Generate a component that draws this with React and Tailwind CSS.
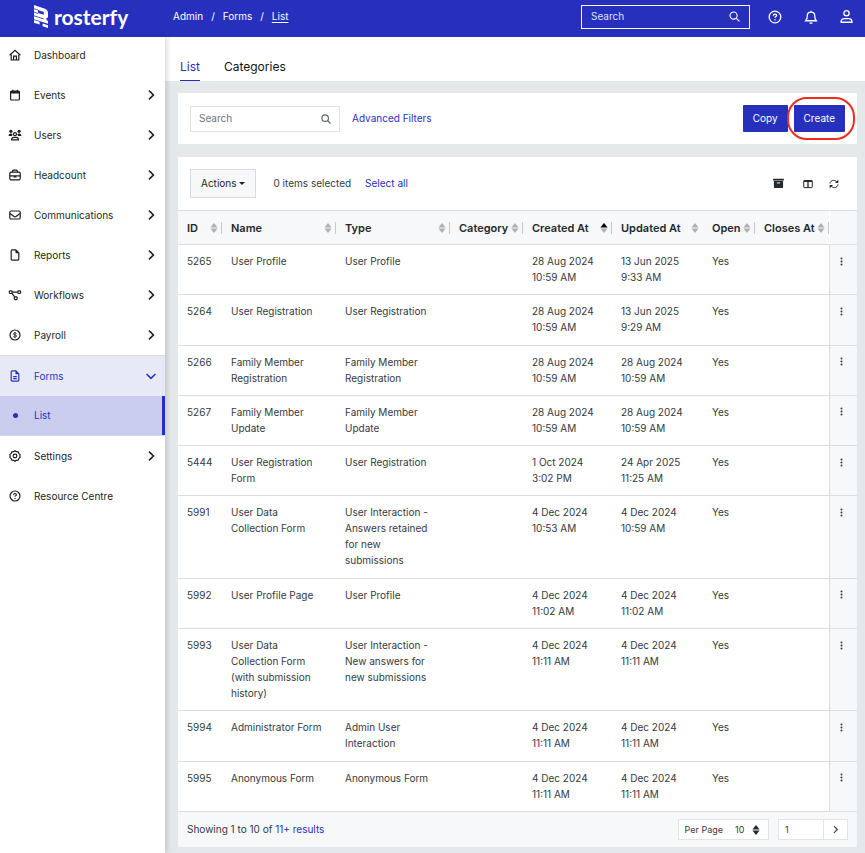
import React, { useState } from "react";

const menu = [
  { label: "Dashboard", icon: "home" },
  { label: "Events", icon: "calendar", more: true },
  { label: "Users", icon: "users", more: true },
  { label: "Headcount", icon: "briefcase", more: true },
  { label: "Communications", icon: "mail", more: true },
  { label: "Reports", icon: "file", more: true },
  { label: "Workflows", icon: "flow", more: true },
  { label: "Payroll", icon: "dollar", more: true },
  { label: "Forms", icon: "form", open: true },
  { label: "Settings", icon: "gear", more: true },
  { label: "Resource Centre", icon: "help" },
];

const columns = [
  { label: "ID", width: "w-[44px]" },
  { label: "Name", width: "" },
  { label: "Type", width: "" },
  { label: "Category", width: "w-[73px]" },
  { label: "Created At", width: "w-[89px]", sorted: true },
  { label: "Updated At", width: "w-[91px]", noLine: true },
  { label: "Open", width: "w-[52px]" },
  { label: "Closes At", width: "w-[74px]" },
];

const forms = [
  { id: 5265, name: "User Profile", type: "User Profile", created: "28 Aug 2024 10:59 AM", updated: "13 Jun 2025 9:33 AM" },
  { id: 5264, name: "User Registration", type: "User Registration", created: "28 Aug 2024 10:59 AM", updated: "13 Jun 2025 9:29 AM" },
  { id: 5266, name: "Family Member Registration", type: "Family Member Registration", created: "28 Aug 2024 10:59 AM", updated: "28 Aug 2024 10:59 AM" },
  { id: 5267, name: "Family Member Update", type: "Family Member Update", created: "28 Aug 2024 10:59 AM", updated: "28 Aug 2024 10:59 AM" },
  { id: 5444, name: "User Registration Form", type: "User Registration", created: "1 Oct 2024 3:02 PM", updated: "24 Apr 2025 11:25 AM" },
  { id: 5991, name: "User Data Collection Form", type: "User Interaction - Answers retained for new submissions", created: "4 Dec 2024 10:53 AM", updated: "4 Dec 2024 10:59 AM" },
  { id: 5992, name: "User Profile Page", type: "User Profile", created: "4 Dec 2024 11:02 AM", updated: "4 Dec 2024 11:02 AM" },
  { id: 5993, name: "User Data Collection Form (with submission history)", type: "User Interaction - New answers for new submissions", created: "4 Dec 2024 11:11 AM", updated: "4 Dec 2024 11:11 AM" },
  { id: 5994, name: "Administrator Form", type: "Admin User Interaction", created: "4 Dec 2024 11:11 AM", updated: "4 Dec 2024 11:11 AM" },
  { id: 5995, name: "Anonymous Form", type: "Anonymous Form", created: "4 Dec 2024 11:11 AM", updated: "4 Dec 2024 11:11 AM" },
];

const shapes = {
  home: (
    <>
      <path d="M.6 6.200 6 1.300l5.400 4.900" />
      <path d="M2.200 5.400v5.600h7.600V5.400" />
      <path d="M4.600 11V7.200h2.800V11" />
    </>
  ),
  calendar: (
    <>
      <rect x="1.600" y="2.200" width="8.800" height="8.800" rx="1" />
      <path d="M1.600 3.300h8.800" strokeWidth="2.400" />
      <path d="M3.700.8v2M8.300.8v2" />
    </>
  ),
  users: (
    <>
      <circle cx="1.900" cy="2.300" r="1.600" fill="currentColor" stroke="none" />
      <circle cx="10.100" cy="2.300" r="1.600" fill="currentColor" stroke="none" />
      <path d="M-.4 6.900c0-1.700.9-2.500 2.300-2.500.9 0 1.500.3 1.700.7L3 6.900zM12.400 6.900c0-1.700-.9-2.500-2.300-2.500-.9 0-1.500.3-1.700.7L9 6.900z" fill="currentColor" stroke="none" />
      <circle cx="6" cy="5.200" r="1.500" />
      <path d="M2.600 10.900c0-1.700 1-2.500 2.200-2.500h2.400c1.200 0 2.200.8 2.200 2.500z" />
    </>
  ),
  briefcase: (
    <>
      <rect x=".8" y="3.200" width="10.400" height="7.600" rx="1.200" />
      <path d="M3.600 3.200V2.200c0-.6.4-1 1-1h2.800c.6 0 1 .4 1 1v1M.8 6.800h10.400M4.600 7.800h2.800" />
    </>
  ),
  mail: (
    <>
      <rect x=".8" y="2" width="10.400" height="8" rx="1.200" />
      <path d="M1 4.400 5 7.400c.6.5 1.400.5 2 0l4-3" />
    </>
  ),
  file: (
    <>
      <path d="M2.200 1.900c0-.6.4-1 1-1h3.600l3 3v6.200c0 .6-.4 1-1 1H3.200c-.6 0-1-.4-1-1z" />
      <path d="M6.800.9v3h3z" fill="currentColor" strokeWidth=".6" />
    </>
  ),
  form: (
    <>
      <path d="M2.200 1.900c0-.6.4-1 1-1h3.600l3 3v6.200c0 .6-.4 1-1 1H3.200c-.6 0-1-.4-1-1z" />
      <path d="M6.800.9v3h3z" fill="currentColor" strokeWidth=".6" />
      <path d="M4.200 6.600h3.600M4.200 8.700h3.600" />
    </>
  ),
  flow: (
    <>
      <rect x=".4" y="1.800" width="2.700" height="2.700" rx=".8" />
      <rect x="8.900" y="1.800" width="2.700" height="2.700" rx=".8" />
      <rect x="5.300" y="7.800" width="2.800" height="2.800" rx=".8" />
      <path d="M3.100 3.100h5.800M3 4.300l2.700 3.600" />
    </>
  ),
  dollar: (
    <>
      <circle cx="6" cy="6" r="5" />
      <path d="M7.500 4.600C7.200 4.100 6.700 3.900 6 3.900c-.9 0-1.500.4-1.500 1S5.100 5.900 6 6s1.600.4 1.600 1.100S6.900 8.200 6 8.200c-.8 0-1.400-.3-1.700-.8M6 3v6" strokeWidth=".9" />
    </>
  ),
  gear: (
    <>
      <path d="m6 .7 1.400 1 1.700.1.700 1.600 1.400 1.200-.4 1.400.4 1.400-1.400 1.200-.7 1.600-1.700.1-1.400 1-1.400-1-1.700-.1-.7-1.600L.8 7.400 1.200 6 .8 4.600l1.400-1.200.7-1.600 1.700-.1z" strokeLinejoin="round" />
      <circle cx="6" cy="6" r="1.800" />
    </>
  ),
  help: (
    <>
      <circle cx="6" cy="6" r="5" />
      <path d="M4.600 4.900c0-.8.600-1.400 1.400-1.400s1.400.5 1.400 1.200c0 .9-1.400 1-1.400 2M6 8v.9" />
    </>
  ),
  bell: (
    <>
      <path d="M1.500 9.200c.9-1 1.300-2 1.300-4 0-1.900 1.300-3.300 3.200-3.300s3.200 1.400 3.200 3.300c0 2 .4 3 1.300 4zM6 .6v1.200" />
      <path d="M4.900 10.800c.5.700 1.700.7 2.200 0" />
    </>
  ),
  user: (
    <>
      <circle cx="6" cy="2.900" r="2.400" />
      <path d="M1 11.300v-.5c0-1.700 1.300-2.800 2.900-2.800h4.200c1.600 0 2.900 1.100 2.900 2.800v.5z" />
    </>
  ),
  search: (
    <>
      <circle cx="5" cy="5" r="3.900" />
      <path d="m8 8 3.400 3.400" />
    </>
  ),
  right: <path d="m4 1.600 4.400 4.400L4 10.400" />,
  down: <path d="M1.600 4 6 8.400 10.400 4" />,
  archive: (
    <>
      <path d="M.2.800h11.600v2H.2z" fill="currentColor" stroke="none" />
      <path d="M1 3.400h10V10c0 .6-.4 1-1 1H2c-.6 0-1-.4-1-1z" fill="currentColor" stroke="none" />
      <path d="M4.200 5.400h3.600" stroke="white" strokeWidth="1" />
    </>
  ),
  board: (
    <>
      <rect x=".9" y="1.900" width="10.200" height="8.400" rx=".8" />
      <path d="M.9 2.700h10.200M6 2.500v7.800" strokeWidth="1.600" />
    </>
  ),
  refresh: (
    <>
      <path d="M1.200 5.500C1.300 3.300 3.200 1.700 5.600 1.700c1.700 0 3 .7 4 2.100M10.800 6.500c-.1 2.200-2 3.800-4.400 3.800-1.700 0-3-.7-4-2.100" />
      <path d="M11.200.8v4H7.200zM.8 11.200v-4h4z" fill="currentColor" stroke="none" />
    </>
  ),
  dots: (
    <>
      <circle cx="6" cy="2" r="1.300" fill="currentColor" stroke="none" />
      <circle cx="6" cy="6" r="1.300" fill="currentColor" stroke="none" />
      <circle cx="6" cy="10" r="1.300" fill="currentColor" stroke="none" />
    </>
  ),
};

const Icon = ({ name, className = "size-3", weight = 1.2 }) => (
  <svg
    viewBox="0 0 12 12"
    fill="none"
    stroke="currentColor"
    strokeWidth={weight}
    aria-hidden="true"
    className={`shrink-0 overflow-visible ${className}`}
  >
    {shapes[name]}
  </svg>
);

const SortIcon = ({ up = "#b0b0b0", down = "#b0b0b0" }) => (
  <svg viewBox="0 0 8 10" className="w-2 h-[10px] shrink-0" aria-hidden="true">
    <path d="M4 0l3.600 4.500H.4z" fill={up} />
    <path d="M4 10l3.600-4.500H.4z" fill={down} />
  </svg>
);

const Logo = () => (
  <a href="#" className="flex items-center gap-1.5 text-white">
    <svg viewBox="0 0 14 23" className="w-[14px] h-[23px]" fill="currentColor" aria-hidden="true">
      <path
        fillRule="evenodd"
        d="M0 0l9.500 3.200C12.500 4.200 14 5.600 14 8v3.200c0 1.600-.8 2.300-2.400 2.200l2.400 2.800v2.600L0 14.200zM4 5l5.800 1.900v2.900L4 7.900z"
      />
      <path d="M0 15l5.600 1.800v2.700L0 17.700zM8.600 18.400l5.400 1.800V23l-5.400-1.800z" />
      <path d="M0 3.700l4 1.300M0 7.200l4 1.300M0 10.800l9.600 3.100" stroke="#2730bd" strokeWidth=".8" />
    </svg>
    <span className="font-[Lato] font-bold text-[21px] leading-6">rosterfy</span>
  </a>
);

const Header = () => (
  <header className="flex items-center h-[37px] shrink-0 pl-[34px] pr-3 pb-1 bg-[#2730bd] text-white">
    <div className="w-[139px] shrink-0">
      <Logo />
    </div>
    <nav className="flex gap-2">
      <a href="#">Admin</a>
      <span>/</span>
      <a href="#">Forms</a>
      <span>/</span>
      <a href="#" className="underline underline-offset-2">List</a>
    </nav>
    <div className="flex items-center ml-auto">
      <label className="flex items-center w-[169px] h-6 px-[9px] border border-white">
        <input
          type="text"
          aria-label="Search"
          placeholder="Search"
          className="w-full min-w-0 outline-none placeholder:text-[#dfe1f7]"
        />
        <Icon name="search" className="size-[11px]" />
      </label>
      <button aria-label="Help" className="ml-[18px]"><Icon name="help" className="size-[14px]" weight={1.1} /></button>
      <button aria-label="Notifications" className="ml-[22px]"><Icon name="bell" className="size-[14px]" weight={1.1} /></button>
      <button aria-label="Account" className="ml-[22px]"><Icon name="user" className="size-[13px]" /></button>
    </div>
  </header>
);

const Sidebar = () => (
  <aside className="w-[165px] shrink-0 z-10 bg-white text-[#1c1f23] shadow-[2px_0_5px_rgba(0,0,0,0.15)]">
    <ul className="-mt-0.5">
      {menu.map((item) => (
        <li key={item.label} className={item.open ? "border-y border-[#d5d9e2] text-[#2730bd]" : ""}>
          <a
            href="#"
            className={`flex items-center h-10 pl-[9px] pr-2 ${item.open ? "bg-[#e7e9f7]" : ""}`}
          >
            <Icon name={item.icon} />
            <span className="ml-[13px]">{item.label}</span>
            {item.more && <Icon name="right" className="ml-auto size-3" weight={1.6} />}
            {item.open && <Icon name="down" className="ml-auto size-3" weight={1.5} />}
          </a>
          {item.open && (
            <a href="#" className="flex items-center h-[39px] pl-[9px] bg-[#cbcdef] border-r-3 border-[#2730bd]">
              <span className="flex justify-center w-3">
                <span className="size-[5px] rounded-full bg-[#2730bd]" />
              </span>
              <span className="ml-[13px]">List</span>
            </a>
          )}
        </li>
      ))}
    </ul>
  </aside>
);

const Filters = () => (
  <section className="flex items-center p-3 bg-white">
    <label className="flex items-center w-[150px] h-[26px] px-2 border border-[#dfe3e6] text-[#5c636a]">
      <input
        type="text"
        aria-label="Search forms"
        placeholder="Search"
        className="w-full min-w-0 outline-none placeholder:text-[#6c757d]"
      />
      <Icon name="search" className="size-[10px]" weight={1.4} />
    </label>
    <a href="#" className="ml-3 text-[#2730bd]">Advanced Filters</a>
    <button className="ml-auto h-[27px] px-[10px] rounded-[1px] bg-[#2730bd] text-white">Copy</button>
    <div className="relative ml-[6px]">
      <button className="h-[27px] px-[10px] rounded-[1px] bg-[#2730bd] text-white">Create</button>
      <span className="absolute -left-[7px] -right-[10px] -inset-y-2 border-2 border-[#f5291c] rounded-[20px] pointer-events-none" />
    </div>
  </section>
);

const FormsTable = () => (
  <div className="grid grow">
    <table className="w-full table-fixed border-separate border-spacing-0 text-left leading-4">
      <thead>
        <tr className="bg-[#f7f8fa] text-[11px]">
          {columns.map((col) => (
            <th key={col.label} className={`h-[35px] p-0 border-y border-[#d8dde2] font-semibold text-[#23282c] whitespace-nowrap ${col.width}`}>
              <div className={`flex items-center justify-between h-3 pl-[9px] ${col.noLine ? "pr-1" : "pr-[3px] border-r border-[#c4c9ce]"}`}>
                {col.label}
                <SortIcon up={col.sorted ? "#000000" : undefined} />
              </div>
            </th>
          ))}
          <th aria-label="Row actions" className="w-7 border-y border-l border-y-[#d8dde2] border-l-white" />
        </tr>
      </thead>
      <tbody>
        {forms.map((form) => (
          <tr key={form.id} className="align-top *:border-b *:border-[#d8dde2] *:pt-2 *:pb-[9px] *:pl-[9px] *:pr-3">
            <td>{form.id}</td>
            <td>{form.name}</td>
            <td>{form.type}</td>
            <td></td>
            <td>{form.created}</td>
            <td>{form.updated}</td>
            <td>Yes</td>
            <td></td>
            <td className="border-l bg-[#f7f8fa]">
              <button aria-label="Open row menu" className="flex items-center justify-center h-4 w-[5px]">
                <Icon name="dots" className="size-[9px]" />
              </button>
            </td>
          </tr>
        ))}
      </tbody>
    </table>
  </div>
);

const Footer = () => (
  <div className="flex items-center shrink-0 h-[35px] px-[9px] bg-[#f7f8fa]">
    <p>
      Showing 1 to 10 of <a href="#" className="text-[#2730bd]">11+ results</a>
    </p>
    <div className="flex items-center ml-auto h-[21px] text-[9px] border border-[#dfe4e8] bg-white">
      <label htmlFor="per-page" className="px-[6px]">Per Page</label>
      <div className="relative flex items-center">
        <select id="per-page" defaultValue="10" className="w-[39px] pl-[6px] appearance-none outline-none">
          <option>10</option>
          <option>25</option>
          <option>50</option>
        </select>
        <span className="absolute right-2 pointer-events-none">
          <SortIcon up="#23282c" down="#23282c" />
        </span>
      </div>
    </div>
    <div className="flex ml-[9px] h-[21px] border border-[#dfe4e8] bg-white text-[9px]">
      <input type="text" aria-label="Page" defaultValue="1" className="w-[44px] pl-[6px] outline-none" />
      <button aria-label="Next page" className="flex items-center justify-center w-6 border-l border-[#dfe4e8]">
        <Icon name="right" className="size-[9px]" weight={1.5} />
      </button>
    </div>
  </div>
);

const App = () => {
  const [tab, setTab] = useState("List");

  return (
    <div className="flex flex-col min-h-screen bg-[#e4e8eb] font-[Inter,sans-serif] text-[10px] text-[#343a40]">
      <Header />
      <div className="flex grow">
        <Sidebar />
        <main className="flex flex-col grow min-w-0">
          <div className="flex items-end gap-6 h-11 px-[15px] bg-white text-[12px] text-[#111418]">
            {["List", "Categories"].map((name) => (
              <button
                key={name}
                onClick={() => setTab(name)}
                className={`pb-1 border-b ${tab === name ? "border-[#2730bd] text-[#2730bd]" : "border-transparent"}`}
              >
                {name}
              </button>
            ))}
          </div>

          <div className="flex flex-col grow gap-[13px] pt-3 pl-[13px] pr-2 pb-[6px]">
            <Filters />

            <section className="flex flex-col grow bg-white">
              <div className="flex items-center p-3">
                <button className="flex items-center gap-0.5 h-[29px] px-[10px] border border-[#d5dbe1] bg-[#f7f8fa] text-[#1c1f23]">
                  Actions
                  <svg viewBox="0 0 6 3" className="w-[6px] h-[3px]" aria-hidden="true">
                    <path d="M0 0h6L3 3z" fill="currentColor" />
                  </svg>
                </button>
                <span className="ml-[18px]">0 items selected</span>
                <a href="#" className="ml-[14px] text-[#2730bd]">Select all</a>
                <div className="flex items-center ml-auto pr-[6px] text-[#23282c]">
                  <button aria-label="Archive"><Icon name="archive" className="size-[11px]" /></button>
                  <button aria-label="Columns" className="ml-[19px]"><Icon name="board" className="size-[10px]" /></button>
                  <button aria-label="Refresh" className="ml-4"><Icon name="refresh" className="size-[10px]" /></button>
                </div>
              </div>
              <FormsTable />
              <Footer />
            </section>
          </div>
        </main>
      </div>
    </div>
  );
};

export default App;
